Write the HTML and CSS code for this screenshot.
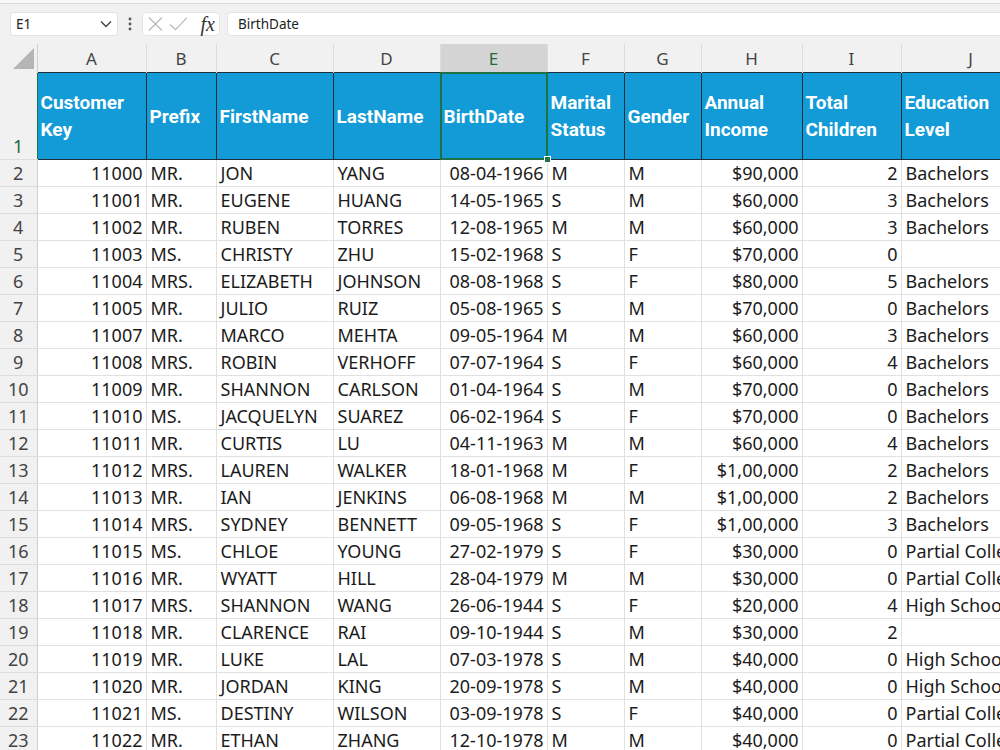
FILE: index.html
```html
<!DOCTYPE html>
<html lang="en">
<head>
    <meta charset="UTF-8">
    <meta name="viewport" content="width=device-width, initial-scale=1.0">
    <title>Customers</title>
    <link rel="stylesheet" href="styles.css">
</head>
<body>
    <div class="topstrip"></div>
    <div class="toolbar">
        <div class="namebox">
            <span>E1</span>
            <svg class="chev" width="12" height="8" viewBox="0 0 12 8"><path d="M1 1.5 L6 6.5 L11 1.5" fill="none" stroke="#444" stroke-width="1.4"/></svg>
        </div>
        <svg class="dots" width="4" height="14" viewBox="0 0 4 14"><circle cx="2" cy="2" r="1.4" fill="#555"/><circle cx="2" cy="7" r="1.4" fill="#555"/><circle cx="2" cy="12" r="1.4" fill="#555"/></svg>
        <div class="fxbox">
            <svg width="16" height="16" viewBox="0 0 16 16"><path d="M1 1 L15 15 M15 1 L1 15" stroke="#b8b8b8" stroke-width="1.3" fill="none"/></svg>
            <svg width="20" height="16" viewBox="0 0 20 16"><path d="M1 8.5 L7 14 L19 1.5" stroke="#b8b8b8" stroke-width="1.3" fill="none"/></svg>
            <span class="fx">fx</span>
        </div>
        <div class="formula">BirthDate</div>
    </div>

    <div class="sheet">
        <table class="grid">
            <colgroup>
                <col style="width:37px"><col style="width:109px"><col style="width:70px"><col style="width:117px">
                <col style="width:107px"><col style="width:107px"><col style="width:77px"><col style="width:77px">
                <col style="width:101px"><col style="width:99px"><col style="width:139px">
            </colgroup>
            <thead>
                <tr class="cols">
                    <th class="corner"><svg class="tri" width="21" height="21" viewBox="0 0 21 21"><polygon points="21,0 21,21 0,21" fill="#b5b5b5"/></svg></th>
                    <th>A</th><th>B</th><th>C</th><th>D</th><th class="on">E</th><th>F</th><th>G</th><th>H</th><th>I</th><th>J</th>
                </tr>
            </thead>
            <tbody>
                <tr class="head">
                    <th class="rn on">1</th>
                    <td>Customer Key</td><td>Prefix</td><td>FirstName</td><td>LastName</td>
                    <td class="sel">BirthDate</td><td>Marital Status</td><td>Gender</td><td>Annual Income</td><td>Total Children</td><td>Education Level</td>
                </tr>
                <tr><th class="rn">2</th><td class="n">11000</td><td>MR.</td><td>JON</td><td>YANG</td><td class="n">08-04-1966</td><td>M</td><td>M</td><td class="n">$90,000</td><td class="n">2</td><td>Bachelors</td></tr>
                <tr><th class="rn">3</th><td class="n">11001</td><td>MR.</td><td>EUGENE</td><td>HUANG</td><td class="n">14-05-1965</td><td>S</td><td>M</td><td class="n">$60,000</td><td class="n">3</td><td>Bachelors</td></tr>
                <tr><th class="rn">4</th><td class="n">11002</td><td>MR.</td><td>RUBEN</td><td>TORRES</td><td class="n">12-08-1965</td><td>M</td><td>M</td><td class="n">$60,000</td><td class="n">3</td><td>Bachelors</td></tr>
                <tr><th class="rn">5</th><td class="n">11003</td><td>MS.</td><td>CHRISTY</td><td>ZHU</td><td class="n">15-02-1968</td><td>S</td><td>F</td><td class="n">$70,000</td><td class="n">0</td><td></td></tr>
                <tr><th class="rn">6</th><td class="n">11004</td><td>MRS.</td><td>ELIZABETH</td><td>JOHNSON</td><td class="n">08-08-1968</td><td>S</td><td>F</td><td class="n">$80,000</td><td class="n">5</td><td>Bachelors</td></tr>
                <tr><th class="rn">7</th><td class="n">11005</td><td>MR.</td><td>JULIO</td><td>RUIZ</td><td class="n">05-08-1965</td><td>S</td><td>M</td><td class="n">$70,000</td><td class="n">0</td><td>Bachelors</td></tr>
                <tr><th class="rn">8</th><td class="n">11007</td><td>MR.</td><td>MARCO</td><td>MEHTA</td><td class="n">09-05-1964</td><td>M</td><td>M</td><td class="n">$60,000</td><td class="n">3</td><td>Bachelors</td></tr>
                <tr><th class="rn">9</th><td class="n">11008</td><td>MRS.</td><td>ROBIN</td><td>VERHOFF</td><td class="n">07-07-1964</td><td>S</td><td>F</td><td class="n">$60,000</td><td class="n">4</td><td>Bachelors</td></tr>
                <tr><th class="rn">10</th><td class="n">11009</td><td>MR.</td><td>SHANNON</td><td>CARLSON</td><td class="n">01-04-1964</td><td>S</td><td>M</td><td class="n">$70,000</td><td class="n">0</td><td>Bachelors</td></tr>
                <tr><th class="rn">11</th><td class="n">11010</td><td>MS.</td><td>JACQUELYN</td><td>SUAREZ</td><td class="n">06-02-1964</td><td>S</td><td>F</td><td class="n">$70,000</td><td class="n">0</td><td>Bachelors</td></tr>
                <tr><th class="rn">12</th><td class="n">11011</td><td>MR.</td><td>CURTIS</td><td>LU</td><td class="n">04-11-1963</td><td>M</td><td>M</td><td class="n">$60,000</td><td class="n">4</td><td>Bachelors</td></tr>
                <tr><th class="rn">13</th><td class="n">11012</td><td>MRS.</td><td>LAUREN</td><td>WALKER</td><td class="n">18-01-1968</td><td>M</td><td>F</td><td class="n">$1,00,000</td><td class="n">2</td><td>Bachelors</td></tr>
                <tr><th class="rn">14</th><td class="n">11013</td><td>MR.</td><td>IAN</td><td>JENKINS</td><td class="n">06-08-1968</td><td>M</td><td>M</td><td class="n">$1,00,000</td><td class="n">2</td><td>Bachelors</td></tr>
                <tr><th class="rn">15</th><td class="n">11014</td><td>MRS.</td><td>SYDNEY</td><td>BENNETT</td><td class="n">09-05-1968</td><td>S</td><td>F</td><td class="n">$1,00,000</td><td class="n">3</td><td>Bachelors</td></tr>
                <tr><th class="rn">16</th><td class="n">11015</td><td>MS.</td><td>CHLOE</td><td>YOUNG</td><td class="n">27-02-1979</td><td>S</td><td>F</td><td class="n">$30,000</td><td class="n">0</td><td>Partial College</td></tr>
                <tr><th class="rn">17</th><td class="n">11016</td><td>MR.</td><td>WYATT</td><td>HILL</td><td class="n">28-04-1979</td><td>M</td><td>M</td><td class="n">$30,000</td><td class="n">0</td><td>Partial College</td></tr>
                <tr><th class="rn">18</th><td class="n">11017</td><td>MRS.</td><td>SHANNON</td><td>WANG</td><td class="n">26-06-1944</td><td>S</td><td>F</td><td class="n">$20,000</td><td class="n">4</td><td>High School</td></tr>
                <tr><th class="rn">19</th><td class="n">11018</td><td>MR.</td><td>CLARENCE</td><td>RAI</td><td class="n">09-10-1944</td><td>S</td><td>M</td><td class="n">$30,000</td><td class="n">2</td><td></td></tr>
                <tr><th class="rn">20</th><td class="n">11019</td><td>MR.</td><td>LUKE</td><td>LAL</td><td class="n">07-03-1978</td><td>S</td><td>M</td><td class="n">$40,000</td><td class="n">0</td><td>High School</td></tr>
                <tr><th class="rn">21</th><td class="n">11020</td><td>MR.</td><td>JORDAN</td><td>KING</td><td class="n">20-09-1978</td><td>S</td><td>M</td><td class="n">$40,000</td><td class="n">0</td><td>High School</td></tr>
                <tr><th class="rn">22</th><td class="n">11021</td><td>MS.</td><td>DESTINY</td><td>WILSON</td><td class="n">03-09-1978</td><td>S</td><td>F</td><td class="n">$40,000</td><td class="n">0</td><td>Partial College</td></tr>
                <tr><th class="rn">23</th><td class="n">11022</td><td>MR.</td><td>ETHAN</td><td>ZHANG</td><td class="n">12-10-1978</td><td>M</td><td>M</td><td class="n">$40,000</td><td class="n">0</td><td>Partial College</td></tr>
            </tbody>
        </table>
    </div>
</body>
</html>
```

FILE: styles.css
```css
body {
    margin: 0;
    background: #fff;
    font-family: "Noto Sans", "Liberation Sans", sans-serif;
    overflow: hidden;
}
.topstrip {
    height: 3px;
    background: #f8f8f8;
    border-bottom: 1px solid #dddddd;
}
.toolbar {
    display: flex;
    align-items: center;
    height: 40px;
    padding-left: 10px;
    background: #f1f1f1;
}
.namebox, .fxbox, .formula {
    height: 24px;
    box-sizing: border-box;
    background: #fff;
    border: 1px solid #e4e4e4;
    border-radius: 4px;
    display: flex;
    align-items: center;
    font-size: 13.5px;
    color: #222;
}
.namebox {
    width: 108px;
    padding: 0 5px;
    justify-content: space-between;
}
.dots {
    margin: 0 10px 0 10px;
}
.fxbox {
    width: 78px;
    padding: 0 4px 0 5px;
    gap: 6px;
}
.fx {
    font-family: "Liberation Serif", serif;
    font-style: italic;
    font-size: 20px;
    color: #333;
    margin-left: 7px;
    line-height: 1;
}
.formula {
    flex: 1;
    margin-left: 7px;
    padding-left: 10px;
    border-right: none;
    border-radius: 4px 0 0 4px;
}

.sheet {
    width: 1000px;
    overflow: hidden;
}
.grid {
    border-collapse: collapse;
    table-layout: fixed;
    width: 1040px;
}
.cols th {
    height: 28px;
    padding: 0;
    background: #f1f1f1;
    border-right: 1px solid #dcdcdc;
    font-weight: normal;
    font-size: 17px;
    color: #444;
    text-align: center;
}
.cols th.on {
    background: #d4d4d4;
    color: #1e6b3e;
}
.cols .corner {
    text-align: right;
    vertical-align: bottom;
    border-right: 1px solid #cfcfcf;
}
.tri {
    display: block;
    margin: 0 3px 4px auto;
}
.grid tbody tr {
    height: 27px;
}
.rn {
    padding: 0;
    background: #f1f1f1;
    border-bottom: 1px solid #dcdcdc;
    border-right: 1px solid #cfcfcf;
    font-weight: normal;
    font-size: 18px;
    color: #444;
    text-align: center;
    vertical-align: bottom;
    line-height: 26px;
}
.rn.on {
    color: #1e6b3e;
    border-right: 1px solid #1e7145;
}
.grid td {
    padding: 0 4px;
    border: 1px solid #e1e1e1;
    font-size: 18px;
    line-height: 26px;
    color: #1b1b1b;
    white-space: nowrap;
    overflow: hidden;
    vertical-align: bottom;
}
.grid td.n {
    text-align: right;
    padding-right: 3px;
}
.grid tr.head {
    height: 87px;
}
.grid tr.head td {
    background: #129bd6;
    border: 1px solid #1f2f3a;
    font-family: Roboto, "Liberation Sans", sans-serif;
    font-weight: 700;
    font-size: 19px;
    line-height: 27px;
    color: #fff;
    white-space: normal;
    vertical-align: middle;
    padding: 0 3px;
}
.grid tr.head td.sel {
    position: relative;
    overflow: visible;
}
.sel::after {
    content: "";
    position: absolute;
    inset: -1px;
    border: 2px solid #1e7145;
}
.sel::before {
    content: "";
    position: absolute;
    right: -4px;
    bottom: -4px;
    width: 5px;
    height: 5px;
    background: #1e7145;
    border: 1px solid #fff;
    z-index: 1;
}
```
